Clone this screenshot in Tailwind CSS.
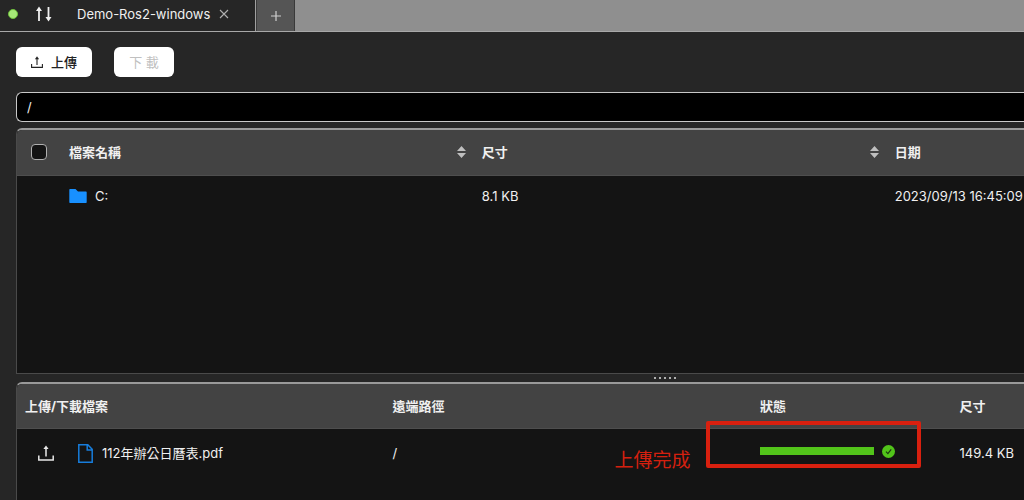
<!DOCTYPE html>
<html lang="zh-Hant">
<head>
  <meta charset="UTF-8">
  <title>Demo-Ros2-windows</title>
  <script src="https://cdn.jsdelivr.net/npm/@tailwindcss/browser@4"></script>
</head>
<body class="h-screen flex flex-col overflow-hidden bg-[#262626] text-[13px] leading-5 text-[#f0f0f0] font-['Inter','Noto_Sans_CJK_TC',sans-serif]">

<!-- Tabs -->
<header class="flex h-8 shrink-0 bg-[#8f8f8f] border-b border-[#a8a8a8]">
  <div class="flex w-64 items-center bg-[#262626] border-r border-[#a0a0a0] pl-2 pb-1">
    <span class="w-[10px] h-[10px] rounded-full bg-[#a6e878] border border-[#6fc03c]"></span>
    <svg class="ml-4 w-5 h-4" viewBox="0 0 20 16" fill="none" stroke="#f0f0f0" stroke-width="1.8">
      <path d="M5 15V3M14.500 1v12"/>
      <path d="M5 .5 2 5h6zM14.500 15.500l-3-4.500h6z" fill="#f0f0f0" stroke="none"/>
    </svg>
    <a href="#" class="ml-[23px]">Demo-Ros2-windows</a>
    <button class="ml-2" aria-label="Close tab">
      <svg class="w-3 h-3" viewBox="0 0 12 12" fill="none" stroke="#b0b0b0" stroke-width="1.1"><path d="M2 2l8 8M10 2l-8 8"/></svg>
    </button>
  </div>
  <button class="flex w-[39px] items-center justify-center bg-[#555] border-x border-[#3a3a3a]" aria-label="New tab">
    <svg class="w-3 h-3" viewBox="0 0 12 12" fill="none" stroke="#d0d0d0" stroke-width="1.2"><path d="M6 1v10M1 6h10"/></svg>
  </button>
</header>

<!-- Toolbar -->
<div class="flex gap-[22px] pl-4 pt-[15px]">
  <button class="flex h-[30px] w-[76px] items-center justify-center gap-2 rounded-md bg-white font-medium text-[#222]">
    <svg class="w-3 h-3" viewBox="0 0 12 12" fill="none" stroke="#222" stroke-width="1.1">
      <path d="M.6 8v3.400h10.800V8M6 9V2.500"/><path d="M6 .3 3.900 3.200h4.200z" fill="#222" stroke="none"/>
    </svg>
    <span>上傳</span>
  </button>
  <button disabled class="h-[30px] w-[60px] rounded-md bg-white text-[#c0c0c0]">下 載</button>
</div>

<div class="pl-4 pt-[15px]">
  <input type="text" value="/" aria-label="路徑" class="block h-[30px] w-full rounded-l-md border border-r-0 border-[#c8c8c8] bg-black px-[10px]">
</div>

<!-- Remote files -->
<section class="ml-4 mt-[6px] flex-1 overflow-hidden rounded-tl-md border border-r-0 border-[#4a4a4a] border-t-2 border-t-[#9a9a9a] bg-[#141414]">
  <table class="w-full table-fixed text-left">
    <colgroup>
      <col class="w-10">
      <col class="w-[41%]">
      <col class="w-[41%]">
      <col>
    </colgroup>
    <thead>
      <tr class="h-[45px] bg-[#434343] border-b border-[#4e4e4e]">
        <th class="pl-[14px]">
          <input type="checkbox" aria-label="全選" class="block h-4 w-4 appearance-none rounded border border-[#b0b0b0] bg-[#141414] checked:bg-[#1890ff]">
        </th>
        <th class="pl-3 pr-1 font-bold">
          <div class="flex items-center justify-between">檔案名稱
            <svg class="w-[9px] h-3" viewBox="0 0 9 12" fill="#bfbfbf"><path d="M4.500 0 9 5H0zM4.500 12 0 7h9z"/></svg>
          </div>
        </th>
        <th class="pl-3 pr-1 font-bold">
          <div class="flex items-center justify-between">尺寸
            <svg class="w-[9px] h-3" viewBox="0 0 9 12" fill="#bfbfbf"><path d="M4.500 0 9 5H0zM4.500 12 0 7h9z"/></svg>
          </div>
        </th>
        <th class="pl-3 font-bold">日期</th>
      </tr>
    </thead>
    <tbody>
      <tr class="h-[42px]">
        <td></td>
        <td class="pl-3">
          <div class="flex items-center gap-2">
            <svg class="w-[18px] h-[14px]" viewBox="0 0 18 14" fill="#1890ff"><path d="M1 0h5.500L9 2.500h8a.7.7 0 0 1 .7.7V13.300a.7.7 0 0 1-.7.7H1a.7.7 0 0 1-.7-.7V.7A.7.7 0 0 1 1 0z"/></svg>
            C:
          </div>
        </td>
        <td class="pl-3">8.1 KB</td>
        <td class="pl-3 whitespace-nowrap">2023/09/13 16:45:09</td>
      </tr>
    </tbody>
  </table>
</section>

<!-- Splitter -->
<div class="flex h-2 shrink-0 cursor-row-resize items-center justify-center gap-[3px] pl-[305px]">
  <span class="h-[2px] w-[2px] bg-[#b0b0b0]"></span>
  <span class="h-[2px] w-[2px] bg-[#b0b0b0]"></span>
  <span class="h-[2px] w-[2px] bg-[#b0b0b0]"></span>
  <span class="h-[2px] w-[2px] bg-[#b0b0b0]"></span>
  <span class="h-[2px] w-[2px] bg-[#b0b0b0]"></span>
</div>

<!-- Transfers -->
<section class="ml-4 shrink-0 overflow-hidden rounded-tl-md border-l border-[#4a4a4a] border-t-2 border-t-[#9a9a9a] bg-[#141414] pb-[22px]">
  <table class="w-full table-fixed text-left">
    <colgroup>
      <col class="w-[36.5%]">
      <col class="w-[36.5%]">
      <col class="w-[19.8%]">
      <col>
    </colgroup>
    <thead>
      <tr class="h-11 bg-[#434343] border-b border-[#4e4e4e]">
        <th class="pl-2 font-bold">上傳/下載檔案</th>
        <th class="pl-2 font-bold">遠端路徑</th>
        <th class="pl-2 font-bold">狀態</th>
        <th class="pl-2 font-bold">尺寸</th>
      </tr>
    </thead>
    <tbody>
      <tr class="h-[50px]">
        <td class="pl-[21px]">
          <div class="flex items-center">
            <svg class="w-4 h-4" viewBox="0 0 16 16" fill="none" stroke="#e8e8e8" stroke-width="1.5">
              <path d="M.8 10.500v4.500h14.400v-4.500M8 11.500V3"/><path d="M8 .5 5.400 4h5.200z" fill="#e8e8e8" stroke="none"/>
            </svg>
            <svg class="ml-6 w-[15px] h-[19px]" viewBox="0 0 15 19" fill="none" stroke="#177ddc" stroke-width="1.5">
              <path d="M.8.8h9l4.400 4.500v12.900H.8zM9.200.8v5.100h5"/>
            </svg>
            <span class="ml-[9px]">112年辦公日曆表.pdf</span>
          </div>
        </td>
        <td class="pl-2">/</td>
        <td class="relative pl-2">
          <div class="flex items-center gap-2 pb-1">
            <div class="h-2 w-[114px] bg-[#52c41a]" role="progressbar" aria-label="上傳進度" aria-valuenow="100"></div>
            <svg class="w-[13px] h-[13px]" viewBox="0 0 13 13"><circle cx="6.500" cy="6.500" r="6.500" fill="#52c41a"/><path d="M4 6.600l1.900 2L9.200 4.400" fill="none" stroke="#1c3a10" stroke-width="1.2"/></svg>
          </div>
          <!-- Note on the finished upload -->
          <div class="absolute -top-2 right-[30px] flex items-end gap-4">
            <span class="whitespace-nowrap text-[19px] leading-[14px] text-[#d4200f]">上傳完成</span>
            <div class="h-[47px] w-[215px] rounded-xs border-4 border-[#d9200f]"></div>
          </div>
        </td>
        <td class="pl-2">149.4 KB</td>
      </tr>
    </tbody>
  </table>
</section>

</body>
</html>
